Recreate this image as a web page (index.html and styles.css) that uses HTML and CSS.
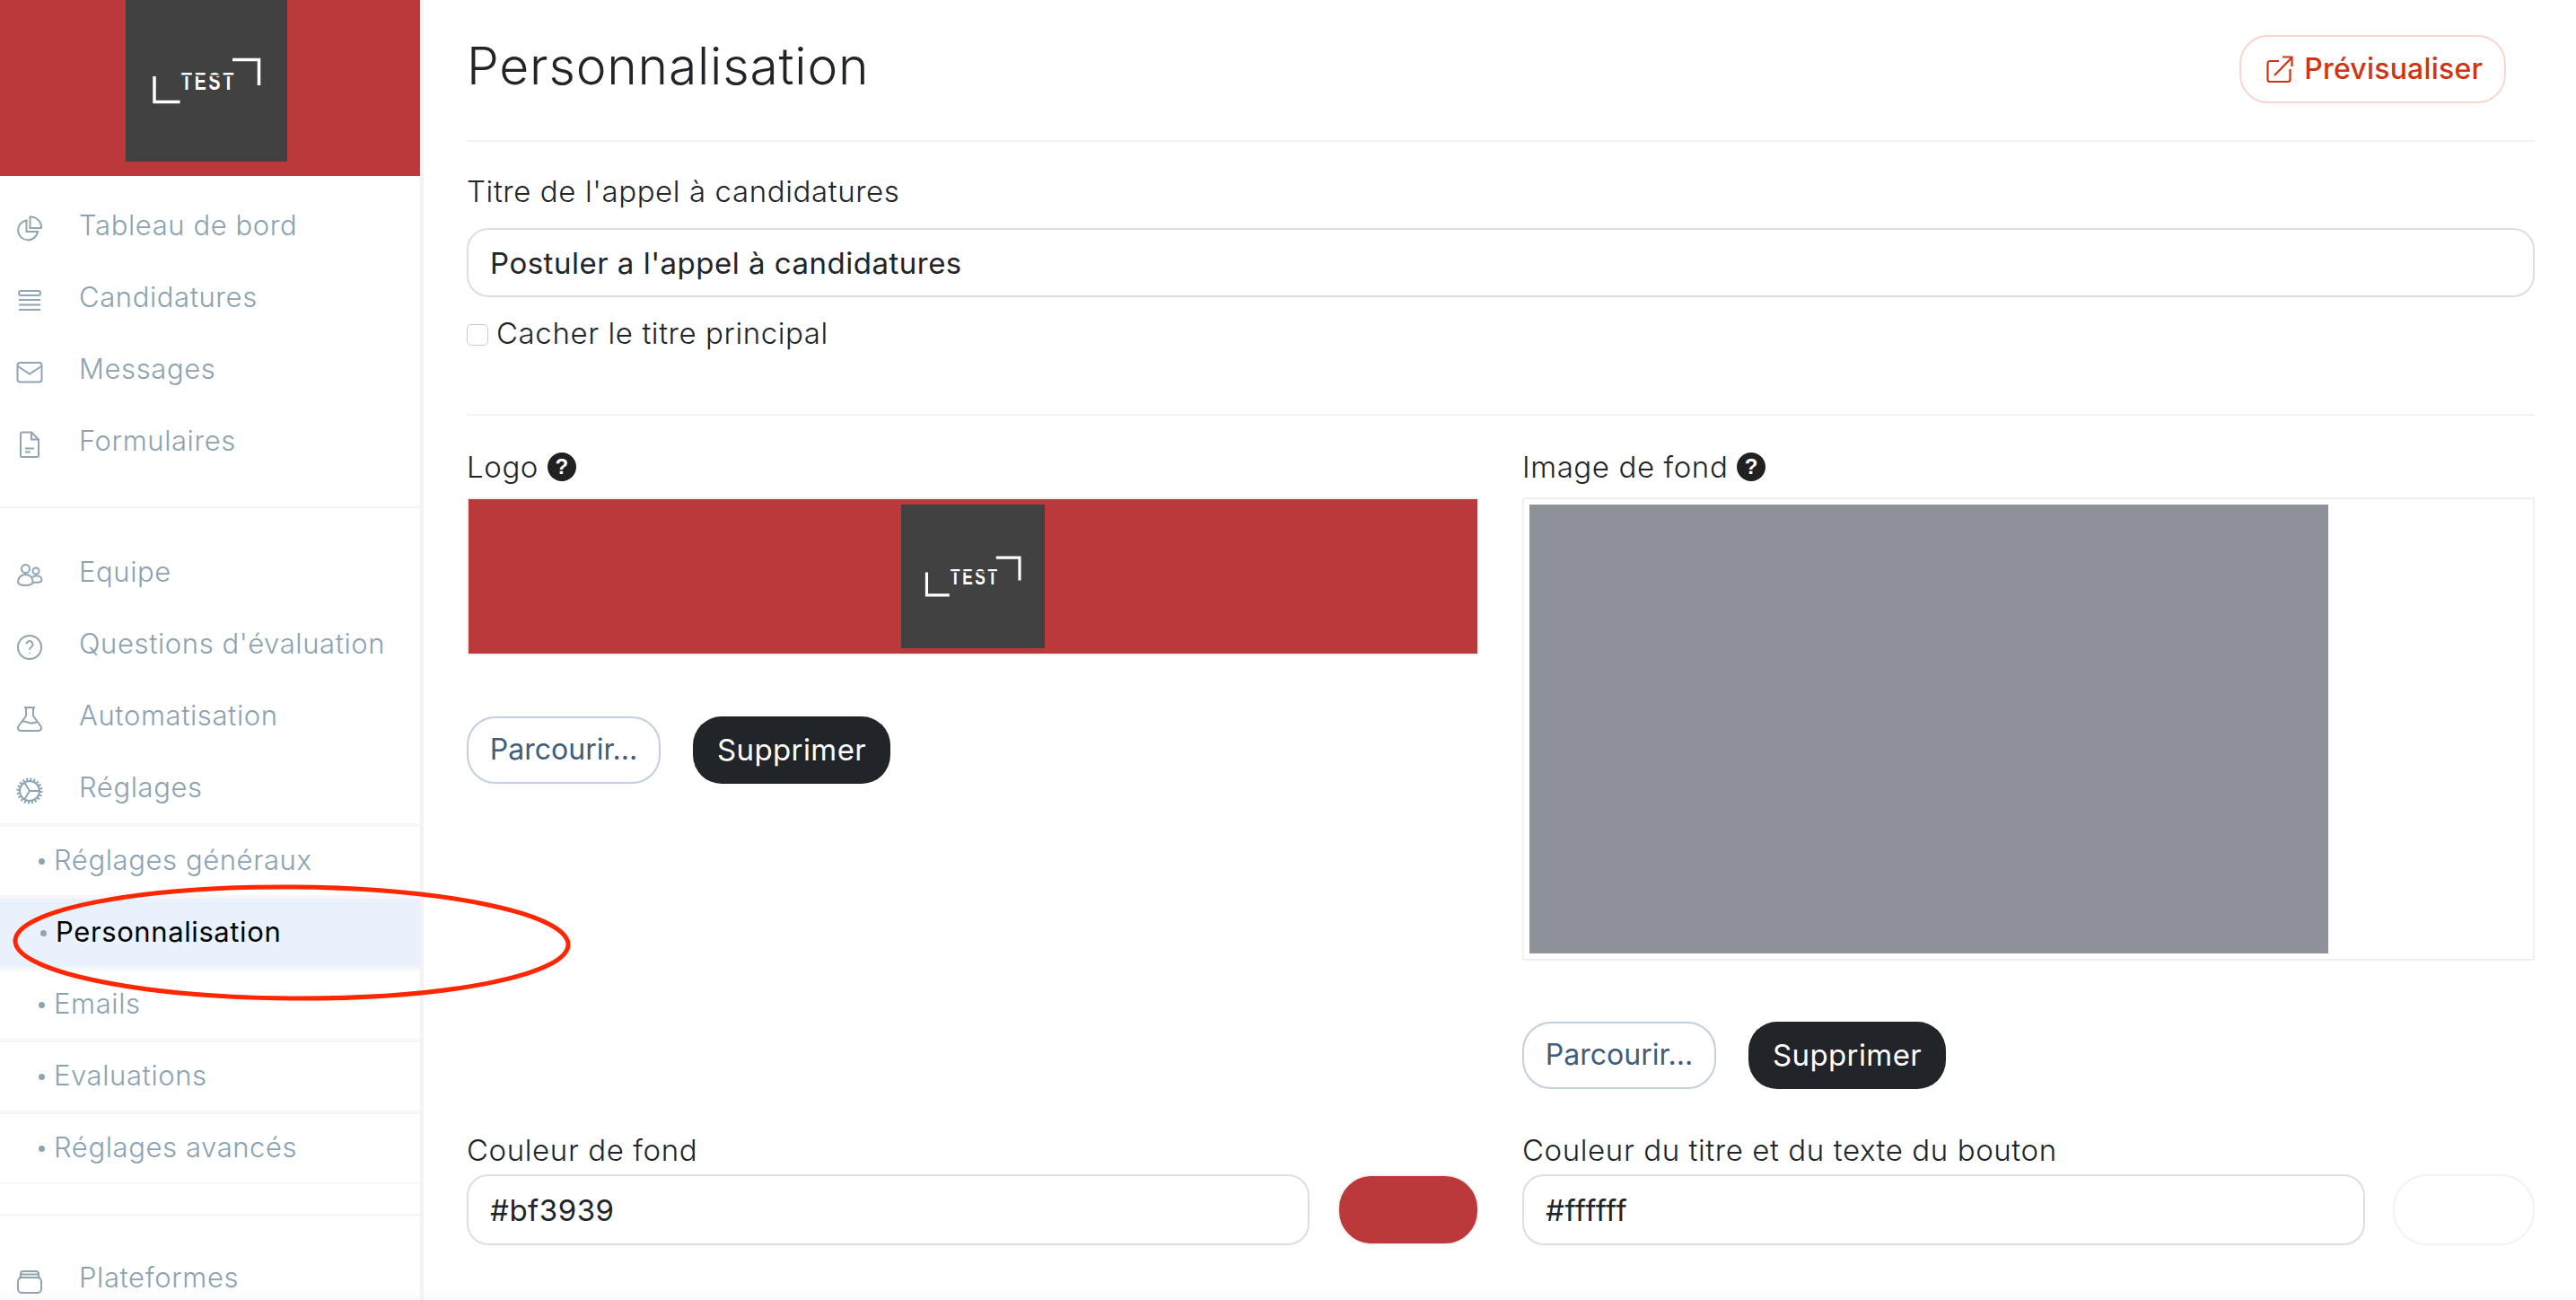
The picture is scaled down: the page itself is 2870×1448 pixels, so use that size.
FILE: index.html
```html
<!DOCTYPE html>
<html lang="fr">
<head>
<meta charset="utf-8">
<title>Personnalisation</title>
<link rel="stylesheet" href="styles.css">
</head>
<body>

<aside class="sidebar">
	<div class="brand">
		<svg class="logo brand-logo" viewBox="0 0 180 180" preserveAspectRatio="none">
			<rect width="180" height="180" fill="#414141"/>
			<path d="M32 85V113.500H60.500M119 66.500H148.500V95" fill="none" stroke="#fff" stroke-width="3.500"/>
			<text class="logo-text" transform="translate(62 100) scale(.72 1)">TEST</text>
			<rect x="60" y="83.500" width="64" height="1.500" fill="#414141"/>
		</svg>
	</div>
	<ul class="nav nav-first">
		<li class="nav-item">
			<svg class="nav-icon" viewBox="0 0 30 30"><path d="M11.500 5.500a11 11 0 1 0 12.500 12.500h-12.500z"/><path d="M15.500 1.500a12 12 0 0 1 12.500 12.500h-12.500z"/></svg>
			Tableau de bord
		</li>
		<li class="nav-item">
			<svg class="nav-icon" viewBox="0 0 30 30"><rect x="3" y="4" width="24" height="5" rx="2.500"/><path d="M3 14h24M3 19.500h24M3 25h24"/></svg>
			Candidatures
		</li>
		<li class="nav-item">
			<svg class="nav-icon" viewBox="0 0 30 30"><rect x="1.500" y="4" width="27" height="21.500" rx="3"/><path d="M2 8l13 8.500L28 8"/></svg>
			Messages
		</li>
		<li class="nav-item">
			<svg class="nav-icon" viewBox="0 0 30 30"><path d="M5 3.500a2 2 0 0 1 2-2h10l8 8v18a1.500 1.500 0 0 1-1.500 1.500h-17a1.500 1.500 0 0 1-1.500-1.500z"/><path d="M17 1.500v8h8M10 19.500h10M10 23.500h6"/></svg>
			Formulaires
		</li>
	</ul>
	<ul class="nav nav-second">
		<li class="nav-item">
			<svg class="nav-icon" viewBox="0 0 30 30"><circle cx="10.500" cy="7.500" r="4.500"/><circle cx="22" cy="10" r="3.500"/><path d="M2 22c0-5 4-8 8.500-8s8 3 8 8c0 3-3.500 4-8 4s-8.500-1-8.500-4z"/><path d="M18 17c1.500-1.500 3-1.800 5-1.800 3 0 5.500 2 5.500 4.800 0 1.800-2 2.700-5 2.700h-5"/></svg>
			Equipe
		</li>
		<li class="nav-item">
			<svg class="nav-icon" viewBox="0 0 30 30"><circle cx="15" cy="15" r="13"/><path d="M11.500 11.500a3.500 3.500 0 1 1 5.500 3c-1.300.9-2 1.600-2 3.200M15 21v1"/></svg>
			Questions d'évaluation
		</li>
		<li class="nav-item">
			<svg class="nav-icon" viewBox="0 0 30 30"><path d="M9 2h12M11 2v9.500L2.500 23c-1.500 2.500 0 5 3 5h19c3 0 4.500-2.500 3-5L19 11.500V2"/><path d="M6 18c4-2 7 1.500 10 1.500 3 0 5-1 8-1.500"/></svg>
			Automatisation
		</li>
		<li class="nav-item">
			<svg class="nav-icon" viewBox="0 0 30 30"><circle cx="15" cy="15" r="11"/><circle class="gear-teeth" cx="15" cy="15" r="13"/><path d="M9.500 6l5.500 9-5.500 9M15 15h11"/></svg>
			Réglages
		</li>
	</ul>
	<ul class="subnav">
		<li class="subnav-item"><span class="subnav-text">Réglages généraux</span></li>
		<li class="subnav-item active"><span class="subnav-text">Personnalisation</span></li>
		<li class="subnav-item"><span class="subnav-text">Emails</span></li>
		<li class="subnav-item"><span class="subnav-text">Evaluations</span></li>
		<li class="subnav-item"><span class="subnav-text">Réglages avancés</span></li>
	</ul>
	<ul class="nav nav-third">
		<li class="nav-item">
			<svg class="nav-icon" viewBox="0 0 30 30"><rect x="2" y="11" width="26" height="17" rx="4.500"/><path d="M5 11V7a3 3 0 0 1 3-3h14a3 3 0 0 1 3 3v4M3 11h24M5 7.500h20"/></svg>
			Plateformes
		</li>
	</ul>
</aside>

<main class="content">
	<header class="page-head">
		<h1>Personnalisation</h1>
		<a class="btn-preview" href="#">
			<svg class="preview-icon" viewBox="0 0 30 30"><path d="M14 6H4a2.500 2.500 0 0 0-2.500 2.500v18A2.500 2.500 0 0 0 4 29h20a2.500 2.500 0 0 0 2.500-2.500V15"/><path d="M9 22L28.500 2M18 1.500h10.500V12"/></svg>
			Prévisualiser
		</a>
	</header>

	<section class="title-section">
		<label class="field-label">Titre de l'appel à candidatures</label>
		<input class="text-input title-input" type="text" value="Postuler a l'appel à candidatures">
		<div class="check-row">
			<span class="checkbox"></span>
			<span>Cacher le titre principal</span>
		</div>
	</section>

	<section class="media-grid">
		<div>
			<label class="field-label">Logo <span class="help">?</span></label>
			<div class="preview-box logo-box">
				<svg class="logo logo-small" viewBox="0 0 180 180" preserveAspectRatio="none">
					<rect width="180" height="180" fill="#414141"/>
					<path d="M32 85V113.500H60.500M119 66.500H148.500V95" fill="none" stroke="#fff" stroke-width="3.500"/>
					<text class="logo-text" transform="translate(62 100) scale(.72 1)">TEST</text>
					<rect x="60" y="83.500" width="64" height="1.500" fill="#414141"/>
				</svg>
			</div>
			<div class="actions">
				<button class="btn btn-outline">Parcourir...</button>
				<button class="btn btn-dark">Supprimer</button>
			</div>
		</div>
		<div>
			<label class="field-label">Image de fond <span class="help">?</span></label>
			<div class="preview-box image-box">
				<div class="image-fill"></div>
			</div>
			<div class="actions">
				<button class="btn btn-outline">Parcourir...</button>
				<button class="btn btn-dark">Supprimer</button>
			</div>
		</div>

		<div class="color-field">
			<label class="field-label">Couleur de fond</label>
			<div class="color-row">
				<input class="text-input" type="text" value="#bf3939">
				<span class="swatch swatch-red"></span>
			</div>
		</div>
		<div class="color-field">
			<label class="field-label">Couleur du titre et du texte du bouton</label>
			<div class="color-row">
				<input class="text-input" type="text" value="#ffffff">
				<span class="swatch"></span>
			</div>
		</div>
	</section>
	<div class="footer-strip"></div>
</main>

<svg class="annotation" viewBox="0 0 660 140">
	<ellipse cx="325" cy="70" rx="308" ry="62" transform="rotate(0.4 325 70)"/>
</svg>

</body>
</html>
```

FILE: styles.css
```css
* {
	box-sizing: border-box;
}
html, body {
	margin: 0;
	height: 1448px;
	overflow: hidden;
}
body {
	display: flex;
	position: relative;
	background: #fff;
	color: #212529;
	font-family: Inter, "Liberation Sans", sans-serif;
	font-size: 33px;
	font-weight: 300;
	letter-spacing: .6px;
}
ul {
	list-style: none;
	margin: 0;
	padding: 0;
}
.logo-text {
	fill: #fff;
	font: 700 27px "Liberation Sans", sans-serif;
	letter-spacing: 4px;
}

/* sidebar */
.sidebar {
	flex: 0 0 472px;
	height: 1448px;
	overflow: hidden;
	border-right: 4px solid #f3f3f3;
	background: linear-gradient(to top, #fafafa, #fff 12px);
	color: #8ba2b2;
	font-size: 31px;
	letter-spacing: .6px;
}
.brand {
	display: flex;
	justify-content: center;
	height: 196px;
	padding-right: 8px;
	background: #bb383b;
}
.brand-logo {
	width: 180px;
	height: 180px;
}
.nav-first {
	padding: 15px 0 33px;
	border-bottom: 2px solid #f3f3f3;
}
.nav-second {
	padding-top: 31px;
}
.nav-third {
	margin-top: 33px;
	padding-top: 29px;
	border-top: 2px solid #f3f3f3;
}
.nav-item {
	display: flex;
	align-items: center;
	gap: 40px;
	height: 80px;
	padding: 0 0 1px 18px;
}
.nav-icon {
	flex: none;
	width: 30px;
	height: 30px;
	margin-top: 8px;
	fill: none;
	stroke: #8fa5b4;
	stroke-width: 2;
}
.gear-teeth {
	stroke-width: 3;
	stroke-dasharray: 2 2.080;
}
.subnav-item {
	display: flex;
	align-items: center;
	height: 80px;
	padding: 0 0 3px 43px;
	border-top: 4px solid #f7f7f7;
}
.subnav-item:last-child {
	height: 82px;
	border-bottom: 2px solid #f7f7f7;
}
.subnav-text::before {
	content: "";
	display: inline-block;
	width: 7px;
	height: 7px;
	margin-right: 10px;
	border-radius: 50%;
	background: #8fa5b4;
	vertical-align: 6px;
}
.subnav-item.active {
	padding-left: 45px;
	background: #e9f1fd;
	color: #000;
	font-weight: 400;
	box-shadow: 0 4px 0 #f7f7f7;
}

/* main column */
.content {
	flex: 1;
	min-width: 0;
	padding: 0 46px 0 48px;
}
.page-head {
	display: flex;
	align-items: center;
	justify-content: space-between;
	height: 158px;
	padding: 0 32px 3px 0;
	border-bottom: 2px solid #f3f3f3;
}
.page-head h1 {
	margin: 0 0 7px;
	font-size: 57px;
	font-weight: 300;
	letter-spacing: .8px;
}
.btn-preview {
	display: flex;
	align-items: center;
	gap: 12px;
	height: 76px;
	padding: 0 24px 0 28px;
	border: 2px solid #f9d6cc;
	border-radius: 32px;
	color: #d13412;
	font-size: 32px;
	font-weight: 500;
	letter-spacing: .2px;
	text-decoration: none;
}
.preview-icon {
	width: 30px;
	height: 30px;
	fill: none;
	stroke: #d13412;
	stroke-width: 2.200;
}
.title-section {
	padding: 35px 0 70px;
	border-bottom: 2px solid #f3f3f3;
}
.field-label {
	display: flex;
	align-items: center;
	gap: 10px;
	height: 40px;
	margin-bottom: 14px;
	color: #212529;
}
.title-section .field-label {
	margin-bottom: 21px;
}
.text-input {
	display: block;
	width: 100%;
	height: 79px;
	padding: 0 24px;
	border: 2px solid #dedede;
	border-radius: 24px;
	background: #fff;
	color: #212529;
	font: 400 33px Inter, "Liberation Sans", sans-serif;
	letter-spacing: .5px;
}
.title-input {
	height: 77px;
}
.check-row {
	display: flex;
	align-items: center;
	gap: 9px;
	height: 40px;
	margin-top: 20px;
}
.checkbox {
	width: 24px;
	height: 24px;
	margin-top: 4px;
	border: 1px solid #ccc;
	border-radius: 5px;
}
.media-grid {
	display: grid;
	grid-template-columns: 1128px 1128px;
	column-gap: 48px;
	padding-top: 37px;
}
.help {
	display: flex;
	align-items: center;
	justify-content: center;
	width: 32px;
	height: 32px;
	border-radius: 50%;
	background: #212121;
	color: #fff;
	font: 700 24px "Liberation Sans", sans-serif;
}
.preview-box {
	border: 2px solid #f0f0f0;
}
.logo-box {
	display: flex;
	justify-content: center;
	height: 176px;
	padding-top: 6px;
	background: #bb383b;
}
.logo-small {
	width: 160px;
	height: 160px;
}
.image-box {
	height: 516px;
	padding: 6px;
}
.image-fill {
	width: 890px;
	height: 500px;
	background: #8f9198;
}
.actions {
	display: flex;
	gap: 36px;
	margin-top: 68px;
}
.btn {
	height: 75px;
	padding: 0 0 2px;
	border-radius: 32px;
	font: 400 32px Inter, "Liberation Sans", sans-serif;
}
.btn-outline {
	width: 216px;
	border: 2px solid #c0d0e0;
	background: #fff;
	color: #3f5d7d;
}
.btn-dark {
	width: 220px;
	border: 0;
	background: #212529;
	color: #fff;
	font-size: 33px;
	letter-spacing: .4px;
}
.color-field {
	padding-top: 48px;
}
.color-field .field-label {
	margin-bottom: 7px;
}
.color-row {
	display: flex;
	align-items: center;
	gap: 31px;
}
.color-row .text-input {
	flex: 1;
	min-width: 0;
}
.swatch {
	flex: none;
	width: 158px;
	height: 79px;
	border: 2px solid #f2f2f2;
	border-radius: 38px;
}
.swatch-red {
	background: #bb383b;
}
.footer-strip {
	height: 10px;
	margin: 50px -46px 0 -48px;
	background: linear-gradient(#fefefe, #fafafa);
}

/* red circle drawn over the screenshot */
.annotation {
	position: absolute;
	left: 0;
	top: 980px;
	width: 660px;
	height: 140px;
	fill: none;
	stroke: #ff2600;
	stroke-width: 5;
}
```
